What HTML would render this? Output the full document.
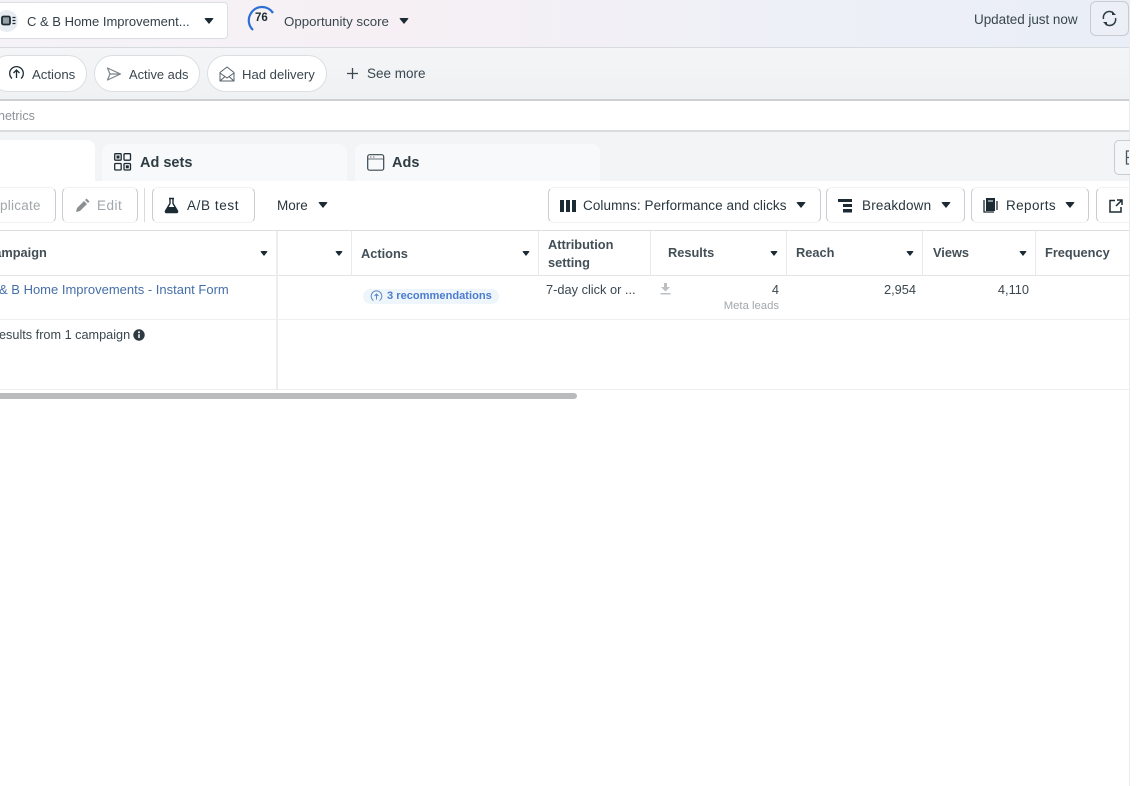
<!DOCTYPE html>
<html><head><meta charset="utf-8"><style>
html,body{margin:0;padding:0;background:#fff}
#p{position:relative;width:1136px;height:786px;overflow:hidden;background:#fff;font-family:"Liberation Sans",sans-serif;color:#1c2b33;font-size:13.5px}
.a{position:absolute;white-space:nowrap}
.b{position:absolute;box-sizing:border-box;background:#fff;border:1px solid #dcdfe2}
.br{position:absolute;box-sizing:border-box;border:1px solid #f0f1f2;border-left-color:#c9cdd1;border-right-color:#c9cdd1;border-radius:6px;height:36px;top:187px;background:#fff}
.tri{position:absolute;width:0;height:0;border-left:5.5px solid transparent;border-right:5.5px solid transparent;border-top:6px solid #1c2b33;border-radius:2px}
.tris{position:absolute;width:0;height:0;border-left:4.5px solid transparent;border-right:4.5px solid transparent;border-top:5px solid #1c2b33;border-radius:2px}
.v{position:absolute;width:1px;background:#e8eaec}
.h{font-weight:bold;font-size:12.800px;color:#434f57}
svg{position:absolute;overflow:visible}
</style></head><body><div id="p">
<div class="a" style="left:0;top:0;width:1129px;height:47px;background:linear-gradient(90deg,#f5f3f6 0%,#f6f0f4 35%,#eff0f7 65%,#e9eef7 100%)"></div>
<div class="a" style="left:0;top:47px;width:1129px;height:1px;background:#d8dbde"></div>
<div class="a" style="left:0;top:48px;width:1129px;height:51px;background:linear-gradient(180deg,#f3f5f7,#eff1f3)"></div>
<div class="a" style="left:0;top:99px;width:1129px;height:2px;background:#ccd0d3"></div>
<div class="a" style="left:0;top:130px;width:1129px;height:2px;background:#d9dbdd"></div>
<div class="a" style="left:0;top:132px;width:1129px;height:49px;background:#f2f4f6"></div>
<div class="a" style="left:1129px;top:0;width:1px;height:786px;background:#ebecee"></div>

<div class="b" style="left:-10px;top:2px;width:238px;height:37px;border-radius:4px"></div>
<div class="a" style="left:-4px;top:10px;width:22px;height:22px;border-radius:50%;background:#e9edf2"></div>
<svg style="left:0;top:15px" width="18" height="12"><rect x="2" y="1.500" width="8" height="8" rx="1.500" fill="#98a0a6" stroke="#1c2b33" stroke-width="1.800"/><path d="M12.500 2.500h3M12.500 5.500h3M12.500 8.500h3" stroke="#1c2b33" stroke-width="1.200"/></svg>
<div class="a" style="left:27px;top:14px;font-size:13px;color:#333f47">C &amp; B Home Improvement...</div>
<div class="tri" style="left:204px;top:18px"></div>

<svg style="left:247px;top:6px" width="28" height="26"><path d="M6 24A13 13 0 0 1 3.500 8 13 13 0 0 1 26 7" fill="none" stroke="#2d6fd6" stroke-width="2.200"/></svg>
<div class="a" style="left:255px;top:12px;font-weight:bold;font-size:11.500px">76</div>
<div class="a" style="left:284px;top:14px;color:#3a474f;font-size:13.300px">Opportunity score</div>
<div class="tri" style="left:399px;top:18px"></div>
<div class="a" style="left:974px;top:12px;color:#3a474f;letter-spacing:-.05px">Updated just now</div>
<div class="a" style="left:1090px;top:1px;width:39px;height:35px;box-sizing:border-box;border:1px solid #c8ccd2;border-radius:6px;background:#eceff6"></div>
<svg style="left:1101px;top:10px" width="17" height="17"><path d="M2.500 9A6 6 0 0 1 12.500 3.200M14.500 8A6 6 0 0 1 4.500 13.800" fill="none" stroke="#2c3a42" stroke-width="1.500"/><path d="M11 1v4h4zM6 16v-4H2z" fill="#2c3a42"/></svg>

<div class="b" style="left:-10px;top:55px;width:97px;height:37px;border-radius:19px"></div>
<svg style="left:8px;top:65px" width="17" height="17"><path d="M4 13.500A6.800 6.800 0 1 1 13 13.500" fill="none" stroke="#1c2b33" stroke-width="1.300"/><path d="M8.500 13V5M5.500 8l3-3 3 3" fill="none" stroke="#1c2b33" stroke-width="1.300"/></svg>
<div class="a" style="left:32px;top:67px;color:#3a474f;font-size:13.200px">Actions</div>
<div class="b" style="left:94px;top:55px;width:106px;height:37px;border-radius:19px"></div>
<svg style="left:106px;top:66px" width="16" height="16"><path d="M1.500 2l13 6-13 6 2.500-6zM4 8h10" fill="none" stroke="#7b848a" stroke-width="1.200" stroke-linejoin="round"/></svg>
<div class="a" style="left:129px;top:67px;color:#3a474f;font-size:12.900px">Active ads</div>
<div class="b" style="left:207px;top:55px;width:120px;height:37px;border-radius:19px"></div>
<svg style="left:219px;top:66px" width="16" height="16"><path d="M1 6.500L8 1l7 5.500V15H1zM1 7l7 5 7-5M1 15l5-4.500M15 15l-5-4.500" fill="none" stroke="#566169" stroke-width="1" stroke-linejoin="round"/></svg>
<div class="a" style="left:242px;top:67px;color:#3a474f;font-size:13.100px">Had delivery</div>
<svg style="left:346px;top:67px" width="13" height="13"><path d="M6.500 1v11M1 6.500h11" stroke="#3a474f" stroke-width="1.300"/></svg>
<div class="a" style="left:367px;top:66px;color:#3a474f">See more</div>
<div class="a" style="left:-2px;top:109px;font-size:12.500px;color:#8c9297">netrics</div>

<div class="a" style="left:-10px;top:140px;width:105px;height:42px;background:#fff;border-radius:8px 8px 0 0"></div>
<div class="a" style="left:102px;top:144px;width:245px;height:38px;background:#f8f9fa;border-radius:8px 8px 0 0"></div>
<svg style="left:114px;top:153px" width="18" height="18"><g fill="none" stroke="#1c2b33" stroke-width="1.300"><rect x=".7" y=".7" width="6.500" height="6.500" rx="1"/><rect x="10" y=".7" width="6.500" height="6.500" rx="1"/><rect x=".7" y="10.500" width="6.500" height="6.500" rx="1"/><rect x="10" y="10.500" width="6.500" height="6.500" rx="1"/></g><rect x="2.500" y="2.500" width="3" height="3" fill="#1c2b33"/><rect x="11.800" y="12.300" width="3" height="3" fill="#1c2b33"/></svg>
<div class="a" style="left:140px;top:155px;font-weight:bold;font-size:14.500px;color:#2f3c44">Ad sets</div>
<div class="a" style="left:355px;top:144px;width:245px;height:38px;background:#f8f9fa;border-radius:8px 8px 0 0"></div>
<svg style="left:367px;top:154px" width="18" height="17"><rect x=".7" y=".7" width="16" height="15.500" rx="2" fill="none" stroke="#3a474f" stroke-width="1.200"/><path d="M1 5h15.500M3 3h1.500M6 3h1.500" stroke="#3a474f" stroke-width=".8"/></svg>
<div class="a" style="left:392px;top:155px;font-weight:bold;font-size:14.500px;color:#2f3c44">Ads</div>
<div class="a" style="left:1114px;top:140px;width:16px;height:35px;box-sizing:border-box;border:1px solid #c8ccd0;border-right:0;border-radius:5px 0 0 5px;background:#f5f6f7"></div>
<svg style="left:1125px;top:150px" width="5" height="15"><path d="M4 1H1.500v13H4M1.500 7.500H4" fill="none" stroke="#4a565d" stroke-width="1.300"/></svg>

<div class="a" style="left:0;top:181px;width:1129px;height:50px;background:#fff"></div>
<div class="a" style="left:0;top:230px;width:1129px;height:1px;background:#dcdee1"></div>
<div class="br" style="left:-8px;width:64px"></div>
<div class="a" style="left:0;top:198px;color:#a1a6aa;letter-spacing:.25px">plicate</div>
<div class="br" style="left:62px;width:76px"></div>
<svg style="left:75px;top:198px" width="15" height="15"><path d="M1 14l1-4 7-7 3 3-7 7zM10 2l1.500-1.500 3 3L13 5z" fill="#8a8f93"/></svg>
<div class="a" style="left:97px;top:198px;color:#a1a6aa;letter-spacing:.5px">Edit</div>
<div class="v" style="left:144px;top:188px;height:34px;background:#d8dbde"></div>
<div class="br" style="left:152px;width:103px"></div>
<svg style="left:164px;top:197px" width="15" height="17"><path d="M5 1.500h5M6 1.500v5L1.500 14a1 1 0 0 0 1 1.500h10a1 1 0 0 0 1-1.500L9 6.500v-5" fill="none" stroke="#1c2b33" stroke-width="1.400"/><path d="M4 10h7l2.500 5h-12z" fill="#1c2b33"/></svg>
<div class="a" style="left:187px;top:198px;color:#29363e;letter-spacing:.6px">A/B test</div>
<div class="a" style="left:277px;top:198px;color:#29363e">More</div>
<div class="tri" style="left:318px;top:202px"></div>

<div class="br" style="left:548px;width:273px"></div>
<svg style="left:560px;top:200px" width="16" height="12"><path d="M0 0h4v12H0zM6 0h4v12H6zM12 0h4v12h-4z" fill="#1c2b33"/></svg>
<div class="a" style="left:583px;top:198px;color:#29363e;letter-spacing:.08px">Columns: Performance and clicks</div>
<div class="tri" style="left:796px;top:202px"></div>
<div class="br" style="left:826px;width:139px"></div>
<svg style="left:838px;top:199px" width="15" height="14"><path d="M0 0h14v3H0zM5 5h9v3H5zM5 10h9v3.500H5z" fill="#1c2b33"/></svg>
<div class="a" style="left:862px;top:198px;color:#29363e;letter-spacing:.2px">Breakdown</div>
<div class="tri" style="left:941px;top:202px"></div>
<div class="br" style="left:971px;width:118px"></div>
<svg style="left:983px;top:198px" width="16" height="15"><path d="M3 0h9v13H3z" fill="#1c2b33"/><path d="M1 2v12h10M14 3v9" fill="none" stroke="#1c2b33" stroke-width="1.300"/><path d="M5 3h5" stroke="#fff"/></svg>
<div class="a" style="left:1006px;top:198px;color:#29363e;letter-spacing:.4px">Reports</div>
<div class="tri" style="left:1065px;top:202px"></div>
<div class="br" style="left:1096px;width:45px"></div>
<svg style="left:1109px;top:199px" width="14" height="14"><path d="M6 1.500H1v11.500h11V8M8 1h5v5M13 1L7 7" fill="none" stroke="#1c2b33" stroke-width="1.500"/></svg>
<div class="a" style="left:1129px;top:181px;width:7px;height:50px;background:#fff"></div>
<div class="a" style="left:1129px;top:181px;width:1px;height:50px;background:#ebecee"></div>

<div class="a h" style="left:-15px;top:245px">Campaign</div>
<div class="tris" style="left:260px;top:251px"></div>
<div class="tris" style="left:335px;top:251px"></div>
<div class="a h" style="left:361px;top:246px">Actions</div>
<div class="tris" style="left:522px;top:251px"></div>
<div class="a h" style="left:548px;top:236px;line-height:18px;white-space:normal;width:90px">Attribution setting</div>
<div class="a h" style="left:668px;top:245px">Results</div>
<div class="tris" style="left:770px;top:251px"></div>
<div class="a h" style="left:796px;top:245px">Reach</div>
<div class="tris" style="left:906px;top:251px"></div>
<div class="a h" style="left:933px;top:245px">Views</div>
<div class="tris" style="left:1019px;top:251px"></div>
<div class="a h" style="left:1045px;top:245px">Frequency</div>
<div class="v" style="left:351px;top:231px;height:44px"></div>
<div class="v" style="left:538px;top:231px;height:44px"></div>
<div class="v" style="left:650px;top:231px;height:44px"></div>
<div class="v" style="left:786px;top:231px;height:44px"></div>
<div class="v" style="left:922px;top:231px;height:44px"></div>
<div class="v" style="left:1035px;top:231px;height:44px"></div>
<div class="a" style="left:0;top:275px;width:1129px;height:1px;background:#e2e4e6"></div>
<div class="a" style="left:0;top:319px;width:1129px;height:1px;background:#eff0f2"></div>
<div class="a" style="left:0;top:389px;width:1129px;height:1px;background:#eceded"></div>
<div class="a" style="left:276px;top:231px;width:2px;height:158px;background:#ebedef"></div>

<div class="a" style="left:-1px;top:282px;font-size:13px;color:#466fa9">&amp; B Home Improvements - Instant Form</div>
<div class="a" style="left:363px;top:289px;width:136px;height:15px;border-radius:8px;background:#eef5fb"></div>
<svg style="left:370px;top:290px" width="13" height="13"><path d="M3.500 10.500A5.300 5.300 0 1 1 9.500 10.500" fill="none" stroke="#5a86c5" stroke-width="1"/><path d="M6.500 9.500V4M4.500 6l2-2 2 2" fill="none" stroke="#5a86c5"/></svg>
<div class="a" style="left:387px;top:290px;font-size:11.100px;font-weight:bold;color:#4b7ccf">3 recommendations</div>
<div class="a" style="left:546px;top:282px;font-size:12.800px;color:#3a474f">7-day click or ...</div>
<svg style="left:660px;top:283px" width="11" height="12"><path d="M4 0h3v4h3L5.500 8.500 1 4h3zM0.500 10h10v1.500H.5z" fill="#bcc0c3"/></svg>
<div class="a" style="right:357px;top:282px;font-size:12.800px;color:#3a474f">4</div>
<div class="a" style="right:357px;top:300px;font-size:11.300px;color:#a3a8ac">Meta leads</div>
<div class="a" style="right:220px;top:282px;font-size:12.800px;color:#3a474f">2,954</div>
<div class="a" style="right:107px;top:282px;font-size:12.800px;color:#3a474f">4,110</div>
<div class="a" style="left:-1px;top:328px;font-size:12.700px;color:#3a474f">esults from 1 campaign</div>
<svg style="left:133px;top:329px" width="12" height="12"><circle cx="6" cy="6" r="5.700" fill="#2d3a42"/><path d="M6 5.200v3.800" stroke="#fff" stroke-width="1.500"/><circle cx="6" cy="3.200" r="1" fill="#fff"/></svg>
<div class="a" style="left:0;top:393px;width:577px;height:6px;background:#b9bbbd;border-radius:0 3px 3px 0"></div>
</div></body></html>
